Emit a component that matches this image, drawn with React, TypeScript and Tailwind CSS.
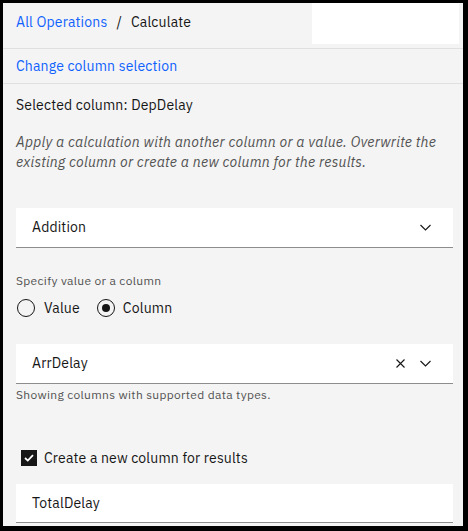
import React from "react";

const font = { fontFamily: '"IBM Plex Sans", Roboto, "Liberation Sans", sans-serif' };

function Chevron() {
  return (
    <svg width="11" height="7" viewBox="0 0 11 7" className="shrink-0">
      <path d="M0.5 1 L5.5 6 L10.5 1" fill="none" stroke="#161616" strokeWidth="1.1" />
    </svg>
  );
}

function Close() {
  return (
    <svg width="9" height="9" viewBox="0 0 9 9" className="shrink-0">
      <path d="M0.5 0.5 L8.5 8.5 M8.5 0.5 L0.5 8.5" fill="none" stroke="#161616" strokeWidth="1.1" />
    </svg>
  );
}

export default function App() {
  return (
    <div className="w-[468px] h-[531px] bg-black pt-[3px] pl-[3px] pr-[5px] pb-[5px]" style={font}>
      <div className="h-full bg-[#f4f4f4] flex flex-col text-[#161616] text-[14px] tracking-[0.16px] overflow-hidden">
        <div className="shrink-0 h-[46px] flex items-start border-b border-[#e0e0e0]">
          <div className="flex items-center h-[37px] pl-[13px] gap-[9px] leading-5">
            <span className="text-[#0f62fe]">All Operations</span>
            <span>/</span>
            <span>Calculate</span>
          </div>
          <div className="ml-auto mr-[4px] w-[147px] h-[41px] bg-white" />
        </div>
        <div className="shrink-0 h-[35px] flex items-center pl-[13px] pb-[1px] border-b border-[#e0e0e0]">
          <span className="text-[#0f62fe] leading-5">Change column selection</span>
        </div>
        <div className="shrink-0 pl-[13px] pr-[10px] flex flex-col">
          <div className="mt-[11px] leading-5">Selected column: DepDelay</div>
          <p className="mt-[17px] italic leading-5 text-[#525252] tracking-[0.27px]">
            Apply a calculation with another column or a value. Overwrite the existing column or create a new column for the results.
          </p>
          <div className="mt-[36px] h-[40px] bg-white border-b border-[#8d8d8d] flex items-center pl-4 pr-[22px]">
            <span className="flex-1">Addition</span>
            <Chevron />
          </div>
          <div className="mt-[25px] text-[12px] leading-4 text-[#525252] tracking-[0.32px]">Specify value or a column</div>
          <div className="mt-[10px] flex items-center h-[18px]">
            <span className="ml-[1px] w-[18px] h-[18px] rounded-full border border-[#161616]" />
            <span className="ml-[9px] leading-5">Value</span>
            <span className="ml-[17px] w-[18px] h-[18px] rounded-full border border-[#161616] flex items-center justify-center">
              <span className="w-[8px] h-[8px] rounded-full bg-[#161616]" />
            </span>
            <span className="ml-[8px] leading-5">Column</span>
          </div>
          <div className="mt-[27px] h-[40px] bg-white border-b border-[#8d8d8d] flex items-center pl-4 pr-[22px]">
            <span className="flex-1">ArrDelay</span>
            <span className="mr-[15px] flex"><Close /></span>
            <Chevron />
          </div>
          <div className="mt-[3px] text-[12px] leading-4 text-[#525252] tracking-[0.32px]">Showing columns with supported data types.</div>
          <div className="mt-[45px] flex items-center h-[20px] pl-[5px]">
            <span className="w-[16px] h-[16px] bg-[#161616] flex items-center justify-center">
              <svg width="10" height="8" viewBox="0 0 10 8">
                <path d="M1 4 L3.8 6.6 L9 1.2" fill="none" stroke="#fff" strokeWidth="1.8" />
              </svg>
            </span>
            <span className="ml-[7px] leading-5">Create a new column for results</span>
          </div>
          <div className="mt-[16px] h-[39px] bg-white border-b border-[#8d8d8d] flex items-center pl-4">
            <span>TotalDelay</span>
          </div>
        </div>
      </div>
    </div>
  );
}
